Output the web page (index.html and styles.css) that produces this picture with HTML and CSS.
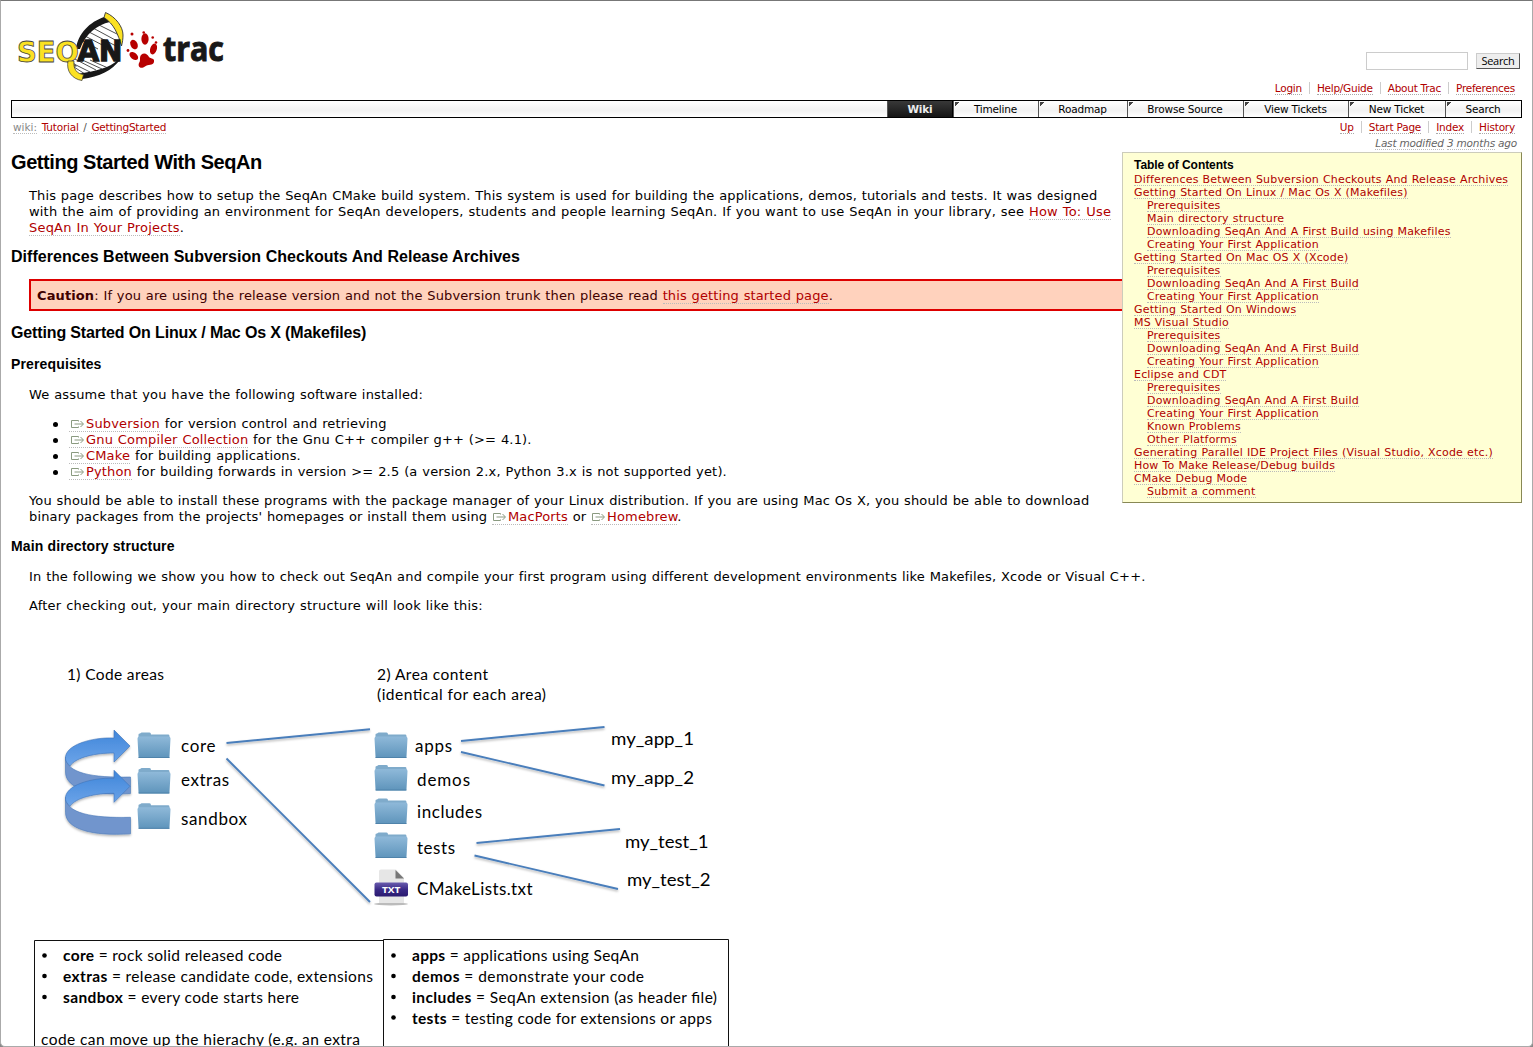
FILE: index.html
```html
<!DOCTYPE html>
<html lang="en">
<head>
<meta charset="utf-8">
<title>Tutorial/GettingStarted – SeqAn</title>
<link rel="stylesheet" href="styles.css">
</head>
<body>
<svg class="defs" width="0" height="0" aria-hidden="true">
  <symbol id="ext" viewBox="0 0 15 10"><path d="M8.500 2.500V1.500H1.500V8.500H8.500V7.500M4.500 5H13M10.500 2L13.500 5L10.500 8" fill="none" stroke="#8a9a80" stroke-width="1"/></symbol>
</svg>
<div class="page">
  <header class="banner">
    <a class="logo" aria-label="SeqAn trac">
      <svg width="216" height="80" viewBox="0 0 216 80">
        <path d="M62 40C66 25 77 14 92 9L104 24L106 48C97 58 84 62 69 66L56 58Z" fill="#fff"/>
        <path d="M85 14L103 23M79 17L105 31M75 21L104 36M71 25L96 38M67 29L84 38M57 46L82 59M56 51L76 61M60 56L71 63M64 47L88 58M76 49L94 57" stroke="#222" stroke-width=".8"/>
        <path d="M62 38C64 22 76 11 90 6L96 11C83 14 72 22 66 38Z" fill="#181818"/>
        <path d="M104 49C95 57 82 60 66 62.500L68 68C86 66 98 59 106 49Z" fill="#181818"/>
        <path d="M91.500 1.500C102 6 109 16 109 24C109 28 108.500 31 107.500 35C104 23 100 13 90 6.500Z" fill="#fbe122" stroke="#333" stroke-width=".9"/>
        <text x="3" y="50.500" textLength="62" lengthAdjust="spacingAndGlyphs" class="logo-seq">SEQ</text>
        <path d="M54 50C52 60 58 68 68 69.500L69.500 63.500C63 63 59 58 60 50Z" fill="#fbe122" stroke="#333" stroke-width=".7"/>
        <text x="63.500" y="50" textLength="45" lengthAdjust="spacingAndGlyphs" class="logo-an">AN</text>
        <g fill="#b70000"><ellipse cx="131" cy="28" rx="3.600" ry="5.800"/><ellipse cx="139.500" cy="38" rx="3.300" ry="5.600" transform="rotate(18 139.500 38)"/><ellipse cx="120" cy="33.500" rx="3.500" ry="5" transform="rotate(-25 120 33.500)"/><ellipse cx="119.800" cy="45" rx="3.200" ry="5" transform="rotate(-50 119.800 45)"/><path d="M127 44C130 41.500 133 42.500 135 46C137 48 141 47 140 51C139 55 134 53 131 55.500C127 58.500 123.500 56 125 52C127 49 125 47 127 44Z"/><circle cx="129.700" cy="21.500" r="1.300"/><circle cx="138.700" cy="26.500" r="1.300"/><circle cx="118" cy="23" r="1.500"/><circle cx="114" cy="39.500" r="1.400"/><circle cx="142" cy="31.500" r="1.300"/></g>
        <text x="149" y="50" textLength="61" lengthAdjust="spacingAndGlyphs" class="logo-trac">trac</text>
      </svg>
    </a>
    <div class="tools">
      <form class="search"><input type="text" aria-label="Search"><button type="button">Search</button></form>
      <ul class="links meta"><li><a>Login</a></li><li><a>Help/Guide</a></li><li><a>About Trac</a></li><li><a>Preferences</a></li></ul>
    </div>
  </header>
  <nav class="mainnav">
    <a class="active w-wiki">Wiki</a><a class="w-time">Timeline</a><a class="w-road">Roadmap</a><a class="w-browse">Browse Source</a><a class="w-view">View Tickets</a><a class="w-new">New Ticket</a><a class="w-search">Search</a>
  </nav>
  <div class="context">
    <div class="path"><a class="first">wiki:</a> <a>Tutorial</a> / <a>GettingStarted</a></div>
    <ul class="links ctx"><li><a>Up</a></li><li><a>Start Page</a></li><li><a>Index</a></li><li><a>History</a></li></ul>
  </div>
  <div class="modified"><a>Last modified</a> <a>3 months</a> ago</div>
  <main>
    <aside class="toc">
      <h4>Table of Contents</h4>
      <ol>
        <li><a>Differences Between Subversion Checkouts And Release Archives</a></li>
        <li><a>Getting Started On Linux / Mac Os X (Makefiles)</a></li>
        <li class="sub"><a>Prerequisites</a></li>
        <li class="sub"><a>Main directory structure</a></li>
        <li class="sub"><a>Downloading SeqAn And A First Build using Makefiles</a></li>
        <li class="sub"><a>Creating Your First Application</a></li>
        <li><a>Getting Started On Mac OS X (Xcode)</a></li>
        <li class="sub"><a>Prerequisites</a></li>
        <li class="sub"><a>Downloading SeqAn And A First Build</a></li>
        <li class="sub"><a>Creating Your First Application</a></li>
        <li><a>Getting Started On Windows</a></li>
        <li><a>MS Visual Studio</a></li>
        <li class="sub"><a>Prerequisites</a></li>
        <li class="sub"><a>Downloading SeqAn And A First Build</a></li>
        <li class="sub"><a>Creating Your First Application</a></li>
        <li><a>Eclipse and CDT</a></li>
        <li class="sub"><a>Prerequisites</a></li>
        <li class="sub"><a>Downloading SeqAn And A First Build</a></li>
        <li class="sub"><a>Creating Your First Application</a></li>
        <li class="sub"><a>Known Problems</a></li>
        <li class="sub"><a>Other Platforms</a></li>
        <li><a>Generating Parallel IDE Project Files (Visual Studio, Xcode etc.)</a></li>
        <li><a>How To Make Release/Debug builds</a></li>
        <li><a>CMake Debug Mode</a></li>
        <li class="sub"><a>Submit a comment</a></li>
      </ol>
    </aside>
    <h1>Getting Started With SeqAn</h1>
    <p class="intro">This page describes how to setup the SeqAn CMake build system. This system is used for building the applications, demos, tutorials and tests. It was designed<br><span class="wide">with the aim of providing an environment for SeqAn developers, students and people learning SeqAn. If you want to use SeqAn in your library, see <a>How To: Use</a></span><br><span class="wide"><a>SeqAn In Your Projects</a>.</span></p>
    <h2>Differences Between Subversion Checkouts And Release Archives</h2>
    <div class="caution"><strong>Caution</strong>: If you are using the release version and not the Subversion trunk then please read <a>this getting started page</a>.</div>
    <h2 class="linux">Getting Started On Linux / Mac Os X (Makefiles)</h2>
    <h3>Prerequisites</h3>
    <p>We assume that you have the following software installed:</p>
    <ul class="software">
      <li><a><svg class="ext"><use href="#ext"/></svg>Subversion</a> for version control and retrieving</li>
      <li><a><svg class="ext"><use href="#ext"/></svg>Gnu Compiler Collection</a> for the Gnu C++ compiler g++ (&gt;= 4.1).</li>
      <li><a><svg class="ext"><use href="#ext"/></svg>CMake</a> for building applications.</li>
      <li><a><svg class="ext"><use href="#ext"/></svg>Python</a> for building forwards in version &gt;= 2.5 (a version 2.x, Python 3.x is not supported yet).</li>
    </ul>
    <p class="install">You should be able to install these programs with the package manager of your Linux distribution. If you are using Mac Os X, you should be able to download<br>binary packages from the projects' homepages or install them using <a><svg class="ext"><use href="#ext"/></svg>MacPorts</a> or <a><svg class="ext"><use href="#ext"/></svg>Homebrew</a>.</p>
    <h3>Main directory structure</h3>
    <p>In the following we show you how to check out SeqAn and compile your first program using different development environments like Makefiles, Xcode or Visual C++.</p>
    <p class="wide">After checking out, your main directory structure will look like this:</p>
    <svg class="diagram" width="710" height="428" viewBox="29 620 710 428">
      <defs>
        <linearGradient id="fold" x2="0" y2="1"><stop offset="0" stop-color="#8fb9d9"/><stop offset="1" stop-color="#5e94bb"/></linearGradient>
        <linearGradient id="arr" x2="0" y2="1"><stop offset="0" stop-color="#3f86da"/><stop offset="1" stop-color="#6ea5e9"/></linearGradient>
        <linearGradient id="txt" x2="0" y2="1"><stop offset="0" stop-color="#6a5cae"/><stop offset=".5" stop-color="#3a2a86"/><stop offset="1" stop-color="#2a1a70"/></linearGradient>
        <filter id="sh" x="-10%" y="-20%" width="120%" height="150%"><feDropShadow dx="0" dy="1.500" stdDeviation="1" flood-opacity=".3"/></filter>
        <g id="folder"><path d="M1 5V2Q1 1 2.500 1L4 0H12Q13.500 0 13.500 2H31Q32 2 32 4V8H1Z" fill="#7fabcb"/><path d="M0 6Q0 4 2 4H31Q33 4 33 6L32 24Q32 25.500 31 25.500H2Q1 25.500 1 24Z" fill="url(#fold)"/><path d="M1 25H32" stroke="#4f83aa"/></g>
        <g id="turn"><path d="M65.500 757C66 773 92 778 130.500 777V793.500C92 796 65.500 789 65.500 772Z" fill="#7195cd" stroke="#4a78b8" stroke-width=".6"/><path d="M65.500 759C64 745 92 737 114 738V730L130 746L114 762V753C96 753 76 757 70 766C67 763 65.500 761 65.500 759Z" fill="url(#arr)" stroke="#3f74b8" stroke-width=".6"/></g>
      </defs>
      <g filter="url(#sh)"><use href="#turn"/><use href="#turn" y="40.300"/></g>
      <g stroke="#4a7ebb" stroke-width="1.900" fill="none" filter="url(#sh)"><path d="M226.500 743L370 729.300M226.500 758.500L370 902M461 741L604.500 727M461 752L604.500 785.500M476.500 843L620 829M474.500 855.500L618 889"/></g>
      <use href="#folder" x="137.500" y="732.500"/><use href="#folder" x="137.500" y="768"/><use href="#folder" x="137.500" y="803.300"/>
      <use href="#folder" x="374.500" y="732.500"/><use href="#folder" x="374.500" y="765"/><use href="#folder" x="374.500" y="798.500"/><use href="#folder" x="374.500" y="832.500"/>
      <g><ellipse cx="391" cy="904" rx="17" ry="1.500" fill="#bbb"/><path d="M379 871Q379 869.500 381 869.500H396L404 878V903H379Z" fill="#e6e6e6"/><path d="M395.500 870L404 878.500H395.500Z" fill="#777"/><rect x="374.500" y="882.500" width="33.500" height="14" rx="2" fill="url(#txt)"/><text x="382" y="892.700" class="badge" textLength="18.500" lengthAdjust="spacingAndGlyphs">TXT</text></g>
      <g class="cap">
        <text x="67" y="679.500" textLength="97">1) Code areas</text>
        <text x="377" y="679.500" textLength="111">2) Area content</text>
        <text x="377" y="700" textLength="169">(identical for each area)</text>
      </g>
      <g class="lab">
        <text x="181" y="751.500" textLength="34.500">core</text><text x="181" y="786" textLength="48">extras</text><text x="181" y="825" textLength="66">sandbox</text>
        <text x="415" y="752" textLength="37">apps</text><text x="417" y="786" textLength="53">demos</text><text x="417" y="817.500" textLength="65">includes</text><text x="417" y="854" textLength="38">tests</text><text x="417" y="895" textLength="115.500">CMakeLists.txt</text>
        <text x="611" y="745" textLength="83" lengthAdjust="spacingAndGlyphs">my_app_1</text><text x="611" y="783.500" textLength="83" lengthAdjust="spacingAndGlyphs">my_app_2</text><text x="625" y="848" textLength="83.500" lengthAdjust="spacingAndGlyphs">my_test_1</text><text x="627" y="886" textLength="83.500" lengthAdjust="spacingAndGlyphs">my_test_2</text>
      </g>
      <path d="M34.500 1048V940.500H383.500M383.500 1048V939.500H728.500V1048" fill="none" stroke="#111"/>
      <g><circle cx="44.500" cy="955.500" r="2.300"/><circle cx="44.500" cy="976" r="2.300"/><circle cx="44.500" cy="997" r="2.300"/><circle cx="393.500" cy="955.500" r="2.300"/><circle cx="393.500" cy="976" r="2.300"/><circle cx="393.500" cy="997" r="2.300"/><circle cx="393.500" cy="1017.500" r="2.300"/></g>
      <g class="cap">
        <text x="63" y="961" textLength="219"><tspan class="b">core</tspan> = rock solid released code</text>
        <text x="63" y="981.500" textLength="310"><tspan class="b">extras</tspan> = release candidate code, extensions</text>
        <text x="63" y="1003" textLength="236"><tspan class="b">sandbox</tspan> = every code starts here</text>
        <text x="41" y="1044.500" textLength="319">code can move up the hierachy (e.g. an extra</text>
        <text x="412" y="961" textLength="227"><tspan class="b">apps</tspan> = applications using SeqAn</text>
        <text x="412" y="981.500" textLength="232"><tspan class="b">demos</tspan> = demonstrate your code</text>
        <text x="412" y="1003" textLength="305"><tspan class="b">includes</tspan> = SeqAn extension (as header file)</text>
        <text x="412" y="1023.500" textLength="300"><tspan class="b">tests</tspan> = testing code for extensions or apps</text>
      </g>
    </svg>
  </main>
</div>
</body>
</html>
```

FILE: styles.css
```css
* { box-sizing: border-box; }
html { background: #888; }
body { margin: 0; font: 13px/16px Verdana, "DejaVu Sans", sans-serif; color: #000; }
.defs { display: block; position: absolute; }
.page { height: 1047px; overflow: hidden; background: #fff; border: 1px solid #aaa; border-top-color: #777; border-radius: 0 0 5px 5px; padding: 0 10px; }
a { color: #b00000; border-bottom: 1px dotted #bbb; }
ul, ol { list-style: none; margin: 0; padding: 0; }

.banner { height: 99px; display: flex; justify-content: space-between; }
.logo { display: block; border: 0; padding: 10px 0 0 3px; }
.logo svg { overflow: visible; }
.logo-seq { font: bold 29px "DejaVu Sans", sans-serif; fill: #fbe122; stroke: #444; stroke-width: .8px; }
.logo-an { font: bold 29px "DejaVu Sans", sans-serif; fill: #181818; stroke: #181818; stroke-width: 1.3px; }
.logo-trac { font: bold 34px "Open Sans", "Noto Sans", sans-serif; fill: #181818; stroke: #181818; stroke-width: 1px; }
.tools { padding-top: 51px; display: flex; flex-direction: column; align-items: flex-end; gap: 12px; }
.search { display: flex; align-items: center; gap: 8px; margin-right: 2px; height: 18px; }
.search input { width: 102px; height: 18px; border: 1px solid #ccc; padding: 0; }
.search button { width: 44px; height: 16px; padding: 0; background: #eee; border: 1px solid #ccc; border-right-color: #555; border-bottom-color: #555; font: 11px/14px "Open Sans", sans-serif; color: #000; letter-spacing: -.3px; }
.links { display: flex; font-size: 10.5px; line-height: 12px; letter-spacing: -.2px; }
.links li { padding: 0 7px 0 8px; }
.links li + li { background: linear-gradient(#ccc, #ccc) 0 0 / 1px 12px no-repeat; }
.links a { display: inline-block; border-bottom-color: #aaa; line-height: 12px; }
.meta { letter-spacing: -.25px; }

.mainnav { height: 18px; border: 1px solid #000; display: flex; justify-content: flex-end; background: linear-gradient(#fff, #f2f2f2 60%, #fff); font-size: 10.5px; line-height: 16px; letter-spacing: -.18px; }
.mainnav a { color: #000; border: 0; border-left: 1px solid #555; padding-right: 1px; text-align: center; background: linear-gradient(135deg, #444 0 3px, transparent 3px) 1px 1px / 6px 6px no-repeat; }
.mainnav .active { background: linear-gradient(#383838, #151515); color: #eee; font-weight: bold; border-right: 1px solid #000; padding: 0; }
.w-wiki { width: 66px; }
.w-time { width: 85px; }
.w-road { width: 89px; }
.w-browse { width: 116px; }
.w-view { width: 105px; }
.w-new { width: 97px; }
.w-search { width: 76px; }

.context { display: flex; justify-content: space-between; height: 17px; padding-top: 3px; font-size: 10.5px; line-height: 12px; color: #555; }
.path { padding-left: 2px; letter-spacing: -.22px; word-spacing: 1.6px; }
.path a { display: inline-block; }
.path .first { color: #888; letter-spacing: 0; }
.modified { text-align: right; font-size: 10.5px; line-height: 12px; font-style: italic; letter-spacing: -.2px; color: #666; padding: 2px 5px 0 0; height: 17px; }
.modified a { color: #666; display: inline-block; }

main { white-space: nowrap; letter-spacing: .16px; word-spacing: .5px; }
.toc { float: right; position: relative; width: 400px; height: 351px; background: #ffffd4; border: 1px solid #ccb; border-right-color: #885; border-bottom-color: #885; padding: 6px 0 0 11px; font-size: 11px; line-height: 13px; letter-spacing: .18px; word-spacing: .3px; }
.toc h4 { margin: 0 0 1px; font: bold 12px/13px "Liberation Sans", sans-serif; letter-spacing: -.05px; word-spacing: 0; }
.toc li { height: 13px; }
.toc a { display: inline-block; height: 13px; line-height: 13px; }
.toc .sub { padding-left: 13px; }
h1, h2, h3 { margin: 0; font-family: "Liberation Sans", sans-serif; font-weight: bold; letter-spacing: 0; word-spacing: 0; }
h1 { font-size: 20px; line-height: 20px; margin-bottom: 16px; letter-spacing: -.43px; }
h2 { font-size: 16px; line-height: 20px; margin: 11px 0 12px; letter-spacing: .04px; }
h3 { font-size: 14px; line-height: 16px; margin: 13px 0 15px; letter-spacing: .14px; }
p { margin: 0 18px 13px; }
p.intro { margin-bottom: 10px; letter-spacing: .135px; }
.install { letter-spacing: .14px; }
p.intro .wide { letter-spacing: .19px; }
.wide { letter-spacing: .215px; }
.caution { margin: 0 0 0 18px; height: 32px; border: 2px solid #d00; background: #ffd2bd; color: #400000; padding: 7px 6px 0; line-height: 16px; letter-spacing: .115px; }
h2.linux { margin: 12px 0 0; letter-spacing: -.14px; }
.software { margin: 0 0 13px 39px; }
.software li { position: relative; padding-left: 19px; }
.software li::before { content: ""; position: absolute; left: 3px; top: 6px; width: 5px; height: 5px; border-radius: 50%; background: #000; }
.ext { width: 15px; height: 10px; margin: 0 1px 0 0; vertical-align: -1px; }
.software .ext { margin-left: 1px; }

.diagram { display: block; margin: -7px 0 0 18px; letter-spacing: 0; word-spacing: 0; }
.diagram text { font-family: Lato, Carlito, sans-serif; }
.diagram .cap text { font-size: 15.5px; }
.diagram .lab text { font-size: 17px; }
.diagram .b { font-weight: bold; }
.diagram .badge { font: bold 9px "Open Sans", sans-serif; fill: #fff; }
```
